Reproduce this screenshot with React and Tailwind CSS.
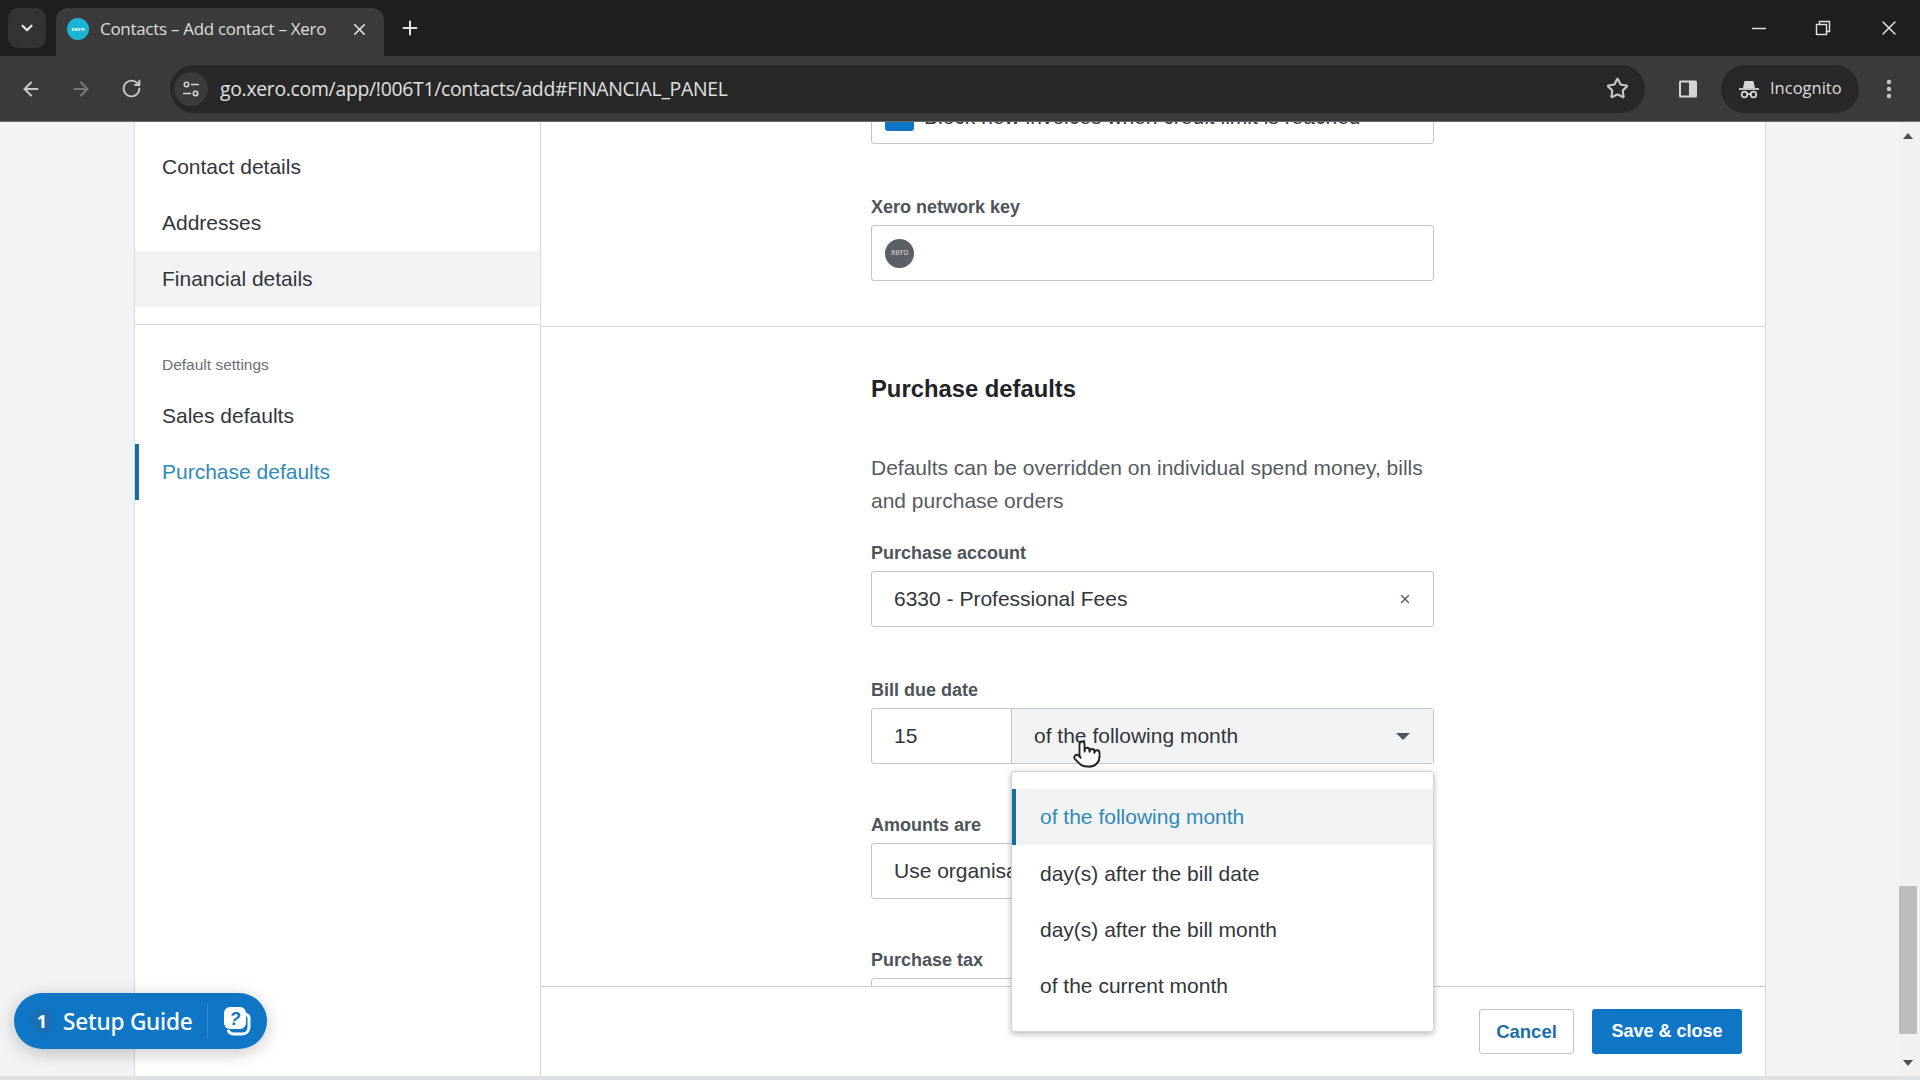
import React from 'react';
import { ArrowLeft, ArrowRight, Check, ChevronDown, MoreVertical, Plus, Pointer, RotateCw, Star, X } from 'lucide-react';

const SANS = "font-['Liberation_Sans',Arial,sans-serif]";

const SideItem = ({ label, active, current }) => (
  <div
    className={`h-[56px] flex items-center pl-[27px] text-[21px] relative ${
      current ? 'bg-[#f2f3f5]' : ''
    } ${active ? 'text-[#2f8ab8]' : 'text-[#32363b]'}`}
  >
    {active && <div className="absolute left-0 top-0 bottom-0 w-[4px] bg-[#13719f]"></div>}
    {label}
  </div>
);

const FieldLabel = ({ children }) => (
  <div className="text-[18px] font-bold leading-[20px] text-[#4e545c] mb-[8px]">{children}</div>
);

const Box = ({ children, className = '' }) => (
  <div className={`h-[56px] border border-[#c3c5c8] rounded-[3px] bg-white flex items-center text-[21px] text-[#32363b] ${className}`}>
    {children}
  </div>
);

const options = ['of the following month', 'day(s) after the bill date', 'day(s) after the bill month', 'of the current month'];

const Chrome = () => (
  <div className="font-['Open_Sans',sans-serif]">
    {/* Tab strip */}
    <div className="h-[56px] bg-[#1f1f1f] flex items-end pl-[8px]">
      <div className="w-[38px] h-[40px] mb-[8px] rounded-[10px] bg-[#333333] flex items-center justify-center">
        <ChevronDown className="w-[18px] h-[18px] text-[#e3e3e3]" strokeWidth={3} />
      </div>
      <div className="ml-[10px] w-[328px] h-[48px] bg-[#3b3b3b] rounded-t-[12px] flex items-center pl-[11px] pr-[15px] pb-[6px]">
        <div className="w-[22px] h-[22px] rounded-full bg-[#1ab4d7] flex items-center justify-center text-[6px] font-bold text-white">xero</div>
        <div className="ml-[11px] text-[17px] tracking-[-0.3px] text-[#dedede] flex-1 whitespace-nowrap">Contacts – Add contact – Xero</div>
        <X className="w-[19px] h-[19px] text-[#e3e3e3]" strokeWidth={2.2} />
      </div>
      <div className="ml-[10px] mb-[12px] w-[32px] h-[32px] flex items-center justify-center">
        <Plus className="w-[22px] h-[22px] text-[#e3e3e3]" strokeWidth={2.2} />
      </div>
      <div className="flex-1"></div>
      <div className="flex items-center h-full pr-[19px] gap-[44px]">
        <svg width="20" height="20" viewBox="0 0 20 20" className="text-[#e3e3e3]">
          <path d="M3 10.5h14" stroke="currentColor" strokeWidth="1.4" />
        </svg>
        <svg width="20" height="20" viewBox="0 0 20 20" fill="none" stroke="#e3e3e3" strokeWidth="1.4">
          <rect x="3.5" y="6.5" width="10" height="10" />
          <path d="M6.5 6.5v-3h10v10h-3" />
        </svg>
        <X className="w-[24px] h-[24px] text-[#e3e3e3]" strokeWidth={1.5} />
      </div>
    </div>
    {/* Toolbar */}
    <div className="h-[66px] bg-[#3b3b3b] border-b border-[#6a6a6a] flex items-center pl-[20px] pr-[16px]">
      <ArrowLeft className="w-[22px] h-[22px] text-[#c9c9c9]" strokeWidth={2.2} />
      <ArrowRight className="ml-[28px] w-[22px] h-[22px] text-[#777777]" strokeWidth={2.2} />
      <RotateCw className="ml-[29px] w-[21px] h-[21px] text-[#c9c9c9]" strokeWidth={2.2} />
      <div className="ml-[28px] w-[1475px] h-[48px] rounded-full bg-[#282828] flex items-center pl-[4px] pr-[16px]">
        <div className="w-[34px] h-[34px] rounded-full bg-[#3b3b3b] flex items-center justify-center">
          <svg width="20" height="20" viewBox="0 0 20 20" fill="none" stroke="#d5d5d5" strokeWidth="1.6">
            <circle cx="5.5" cy="5.5" r="2.2" />
            <path d="M10 5.5h8M2 14.5h8" />
            <circle cx="14.5" cy="14.5" r="2.2" />
          </svg>
        </div>
        <div className="ml-[12px] text-[19.4px] tracking-[-0.3px] text-[#e0e0e0] flex-1 whitespace-nowrap">go.xero.com/app/!006T1/contacts/add#FINANCIAL_PANEL</div>
        <Star className="w-[23px] h-[23px] text-[#c9c9c9]" strokeWidth={2.2} />
      </div>
      <svg className="ml-[32px]" width="22" height="22" viewBox="0 0 22 22">
        <rect x="2" y="2.5" width="18" height="17" rx="1.5" fill="#d5d5d5" />
        <rect x="4" y="4.5" width="8" height="13" fill="#3b3b3b" />
      </svg>
      <div className="ml-[22px] w-[138px] h-[48px] rounded-full bg-[#282828] flex items-center pl-[16px]">
        <svg width="24" height="24" viewBox="0 0 24 24" fill="none" stroke="#d5d5d5" strokeWidth="1.8">
          <path d="M2 12h20" />
          <path d="M6 11l1.5-7h9L18 11" fill="#d5d5d5" stroke="none" />
          <circle cx="7.5" cy="17.5" r="2.8" />
          <circle cx="16.5" cy="17.5" r="2.8" />
          <path d="M10.3 17h3.4" />
        </svg>
        <span className="ml-[9px] text-[16.5px] text-[#dedede]">Incognito</span>
      </div>
      <MoreVertical className="ml-[18px] w-[24px] h-[24px] text-[#c9c9c9]" strokeWidth={2.4} />
    </div>
  </div>
);

const App = () => {
  return (
    <div className={`relative w-[1920px] h-[1080px] overflow-hidden flex flex-col bg-[#f2f3f4] ${SANS}`}>
      <Chrome />

      <div className="flex-1 min-h-0 flex pl-[134px] border-b-[4px] border-[#e0e1e2]">
        {/* Sidebar */}
        <div className="w-[407px] bg-white border-x border-[#d6d8da] pt-[17px]">
          <SideItem label="Contact details" />
          <SideItem label="Addresses" />
          <SideItem label="Financial details" current />
          <div className="mt-[17px] border-t border-[#d6d8da]"></div>
          <div className="pl-[27px] pt-[31px] pb-[14px] text-[15.5px] leading-[18px] text-[#6b7076]">Default settings</div>
          <SideItem label="Sales defaults" />
          <SideItem label="Purchase defaults" active />
        </div>

        {/* Main form */}
        <div className="w-[1225px] bg-white border-r border-[#d6d8da] flex flex-col min-h-0">
          <div className="flex-1 min-h-0 overflow-hidden">
            <div className="pl-[330px] w-[893px] -mt-[30px]">
              <div className="h-[52px] border border-[#c3c5c8] rounded-[3px] flex items-center pl-[13px] pb-[3px] text-[21px] text-[#32363b]">
                <div className="w-[29px] h-[29px] rounded-[3px] bg-[#0f76c6] mr-[10px] flex items-center justify-center">
                  <Check className="w-[16px] h-[16px] text-white" strokeWidth={3} />
                </div>
                Block new invoices when credit limit is reached
              </div>
              <div className="mt-[53px]">
                <FieldLabel>Xero network key</FieldLabel>
                <Box className="pl-[13px]">
                  <div className="w-[29px] h-[29px] rounded-full bg-[#5b5f66] flex items-center justify-center text-[9px] text-[#d8d8d8]">xero</div>
                </Box>
              </div>
            </div>
            <div className="mt-[45px] border-t border-[#d6d8da]"></div>
            <div className="pl-[330px] w-[893px]">
              <h2 className="mt-[47px] text-[23.8px] leading-[30px] font-bold text-[#1f2327]">Purchase defaults</h2>
              <p className="mt-[47px] text-[21px] leading-[33px] text-[#555b62]">
                Defaults can be overridden on individual spend money, bills and purchase orders
              </p>
              <div className="mt-[26px]">
                <FieldLabel>Purchase account</FieldLabel>
                <Box className="pl-[22px] pr-[21px] justify-between">
                  6330 - Professional Fees
                  <X className="w-[14px] h-[14px] text-[#5b6068]" strokeWidth={2.5} />
                </Box>
              </div>
              <div className="mt-[53px]">
                <FieldLabel>Bill due date</FieldLabel>
                <div className="h-[56px] flex border border-[#c3c5c8] rounded-[3px] text-[21px] text-[#32363b]">
                  <div className="w-[140px] pl-[22px] flex items-center border-r border-[#c3c5c8]">15</div>
                  <div className="flex-1 bg-[#f2f3f5] pl-[22px] pr-[23px] flex items-center justify-between">
                    of the following month
                    <div className="w-0 h-0 border-x-[7px] border-x-transparent border-t-[7px] border-t-[#4e545c]"></div>
                  </div>
                </div>
              </div>
              <div className="mt-[51px]">
                <FieldLabel>Amounts are</FieldLabel>
                <Box className="pl-[22px]">Use organisation settings</Box>
              </div>
              <div className="mt-[51px]">
                <FieldLabel>Purchase tax</FieldLabel>
                <Box></Box>
              </div>
            </div>
          </div>
          <div className="h-[90px] shrink-0 bg-white border-t border-[#c9cbcd] flex items-center justify-end gap-[18px] pr-[23px]">
            <button className="w-[95px] h-[45px] border border-[#c3c5c8] rounded-[3px] bg-white text-[18.5px] font-bold text-[#1c6da8]">Cancel</button>
            <button className="w-[150px] h-[45px] rounded-[3px] bg-[#0f76c6] text-[18px] font-bold text-white">Save &amp; close</button>
          </div>
        </div>

        <div className="flex-1"></div>

        {/* Scrollbar */}
        <div className="w-[21px] pr-[3px] flex flex-col items-center justify-between bg-[#f1f1f1] pt-[11px] pb-[10px]">
          <div className="w-0 h-0 border-x-[5px] border-x-transparent border-b-[6px] border-b-[#505050]"></div>
          <div className="w-[18px] h-[148px] rounded-[1px] bg-[#bcbcbc] mt-auto mb-[26px]"></div>
          <div className="w-0 h-0 border-x-[5px] border-x-transparent border-t-[6px] border-t-[#505050]"></div>
        </div>
      </div>

      {/* Open dropdown */}
      <div className="absolute left-[1011px] top-[771px] w-[423px] h-[261px] bg-white border border-[#d2d4d6] rounded-[3px] shadow-[0_2px_6px_rgba(0,0,0,0.28)] py-[17px] text-[21px]">
        {options.map((option, i) => (
          <div
            key={option}
            className={`relative h-[56.3px] flex items-center pl-[28px] ${
              i === 0 ? 'bg-[#f2f3f5] text-[#2f8ab8]' : 'text-[#32363b]'
            }`}
          >
            {i === 0 && <div className="absolute left-0 top-0 bottom-0 w-[4px] bg-[#13719f]"></div>}
            {option}
          </div>
        ))}
      </div>

      {/* Mouse pointer */}
      <Pointer className="absolute left-[1072px] top-[737px] w-[30px] h-[34px]" fill="#ffffff" stroke="#222222" strokeWidth={1.5} />

      {/* Setup guide pill */}
      <div className="absolute left-[14px] top-[993px] w-[253px] h-[56px] rounded-full bg-[#0f76c6] shadow-[0_4px_18px_rgba(0,0,0,0.22)] flex items-center pl-[16px] text-white font-['Noto_Sans',sans-serif]">
        <div className="w-[24px] h-[24px] rounded-full bg-[#1a6fb5] flex items-center justify-center text-[18px] font-bold">1</div>
        <span className="ml-[9px] pt-[1px] text-[22.6px] tracking-[-0.2px] w-[144px] whitespace-nowrap font-medium">Setup Guide</span>
        <div className="w-px h-[36px] bg-[#2f86cc]"></div>
        <svg className="ml-[14px]" width="30" height="32" viewBox="0 0 30 32" fill="none">
          <path d="M24 9.5c2 .6 3 1.6 3 3.5v9c0 4-2.5 7-7 7h-8c-2.5 0-4.5-1-5.5-3" stroke="#ffffff" strokeWidth="3" strokeLinecap="round" />
          <rect x="2" y="2" width="22" height="22" rx="6" fill="#ffffff" />
          <text x="13" y="20" textAnchor="middle" fontSize="18" fontWeight="700" fontStyle="italic" fill="#0f76c6" fontFamily="Liberation Sans, sans-serif">?</text>
        </svg>
      </div>
    </div>
  );
};

export default App;
